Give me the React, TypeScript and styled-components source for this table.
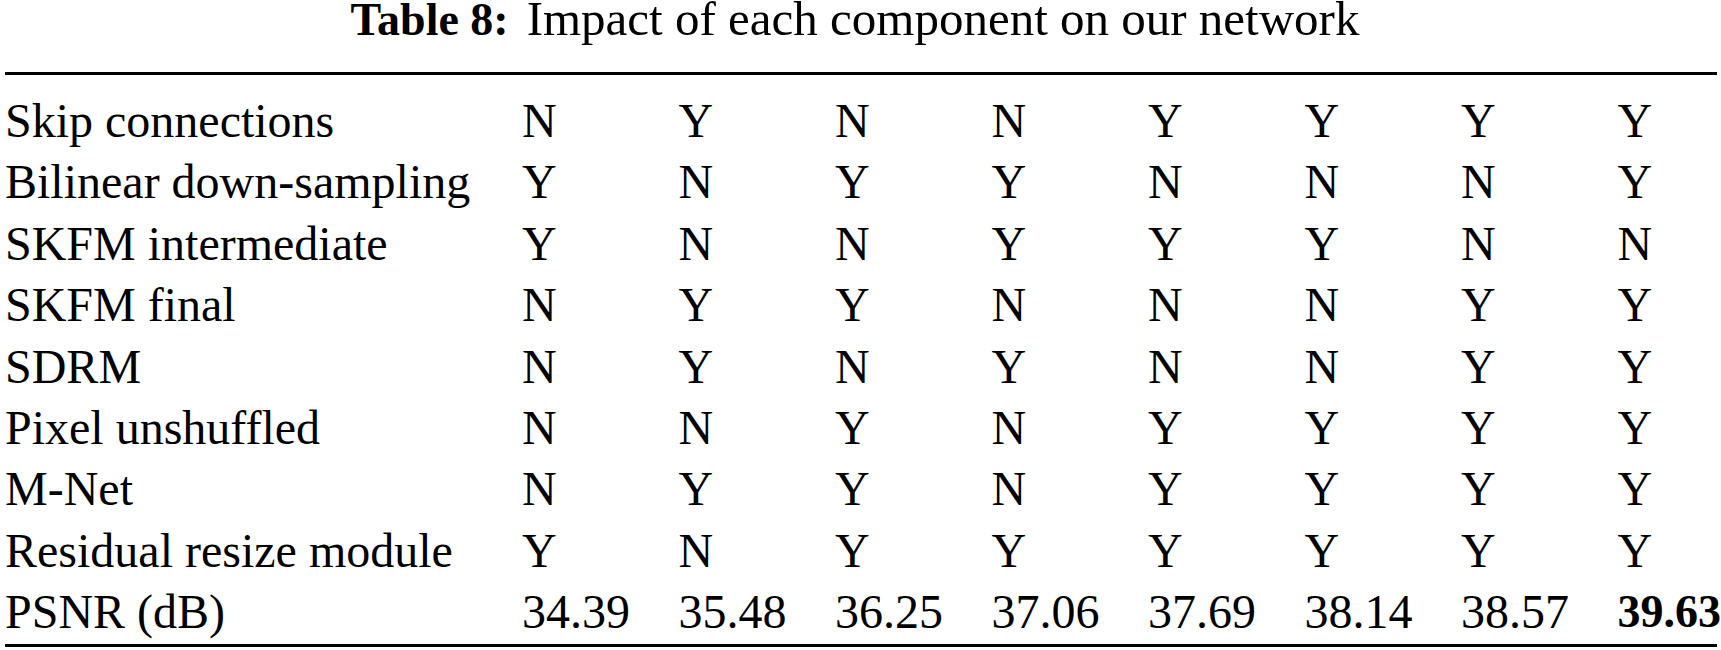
import React from "react";
import styled, { createGlobalStyle } from "styled-components";

const GlobalStyle = createGlobalStyle`
  html, body {
    margin: 0;
    padding: 0;
    background: #fff;
  }
  body {
    font-family: "Liberation Serif", "Times New Roman", serif;
    color: #000;
  }
`;

const Page = styled.div`
  width: 1712px;
  padding: 0 4px 0 5px;
`;

const Caption = styled.div`
  text-align: center;
  font-size: 49px;
  line-height: 38px;
  height: 38px;
  margin-bottom: 34px;
  padding-right: 12px;
  white-space: nowrap;
`;

const CaptionLabel = styled.span`
  font-weight: bold;
  font-size: 46px;
  margin-right: 18px;
`;

const Table = styled.div`
  border-top: 3px solid #000;
  border-bottom: 3px solid #000;
  padding-top: 15px;
  padding-bottom: 1px;
`;

const Row = styled.div`
  display: grid;
  grid-template-columns: 517px repeat(7, 156.5px) 1fr;
  font-size: 48px;
  line-height: 61.4px;
  white-space: nowrap;
`;

const Cell = styled.div<{ $bold?: boolean }>`
  font-weight: ${(p) => (p.$bold ? "bold" : "normal")};
  font-size: ${(p) => (p.$bold ? "46px" : "inherit")};
`;

const rows: [string, string[]][] = [
  ["Skip connections", ["N", "Y", "N", "N", "Y", "Y", "Y", "Y"]],
  ["Bilinear down-sampling", ["Y", "N", "Y", "Y", "N", "N", "N", "Y"]],
  ["SKFM intermediate", ["Y", "N", "N", "Y", "Y", "Y", "N", "N"]],
  ["SKFM final", ["N", "Y", "Y", "N", "N", "N", "Y", "Y"]],
  ["SDRM", ["N", "Y", "N", "Y", "N", "N", "Y", "Y"]],
  ["Pixel unshuffled", ["N", "N", "Y", "N", "Y", "Y", "Y", "Y"]],
  ["M-Net", ["N", "Y", "Y", "N", "Y", "Y", "Y", "Y"]],
  ["Residual resize module", ["Y", "N", "Y", "Y", "Y", "Y", "Y", "Y"]],
  ["PSNR (dB)", ["34.39", "35.48", "36.25", "37.06", "37.69", "38.14", "38.57", "39.63"]],
];

export default function App() {
  return (
    <>
      <GlobalStyle />
      <Page>
        <Caption>
          <CaptionLabel>Table 8:</CaptionLabel>
          Impact of each component on our network
        </Caption>
        <Table>
          {rows.map(([label, values], r) => (
            <Row key={label}>
              <Cell>{label}</Cell>
              {values.map((v, i) => (
                <Cell key={i} $bold={r === rows.length - 1 && i === values.length - 1}>
                  {v}
                </Cell>
              ))}
            </Row>
          ))}
        </Table>
      </Page>
    </>
  );
}
